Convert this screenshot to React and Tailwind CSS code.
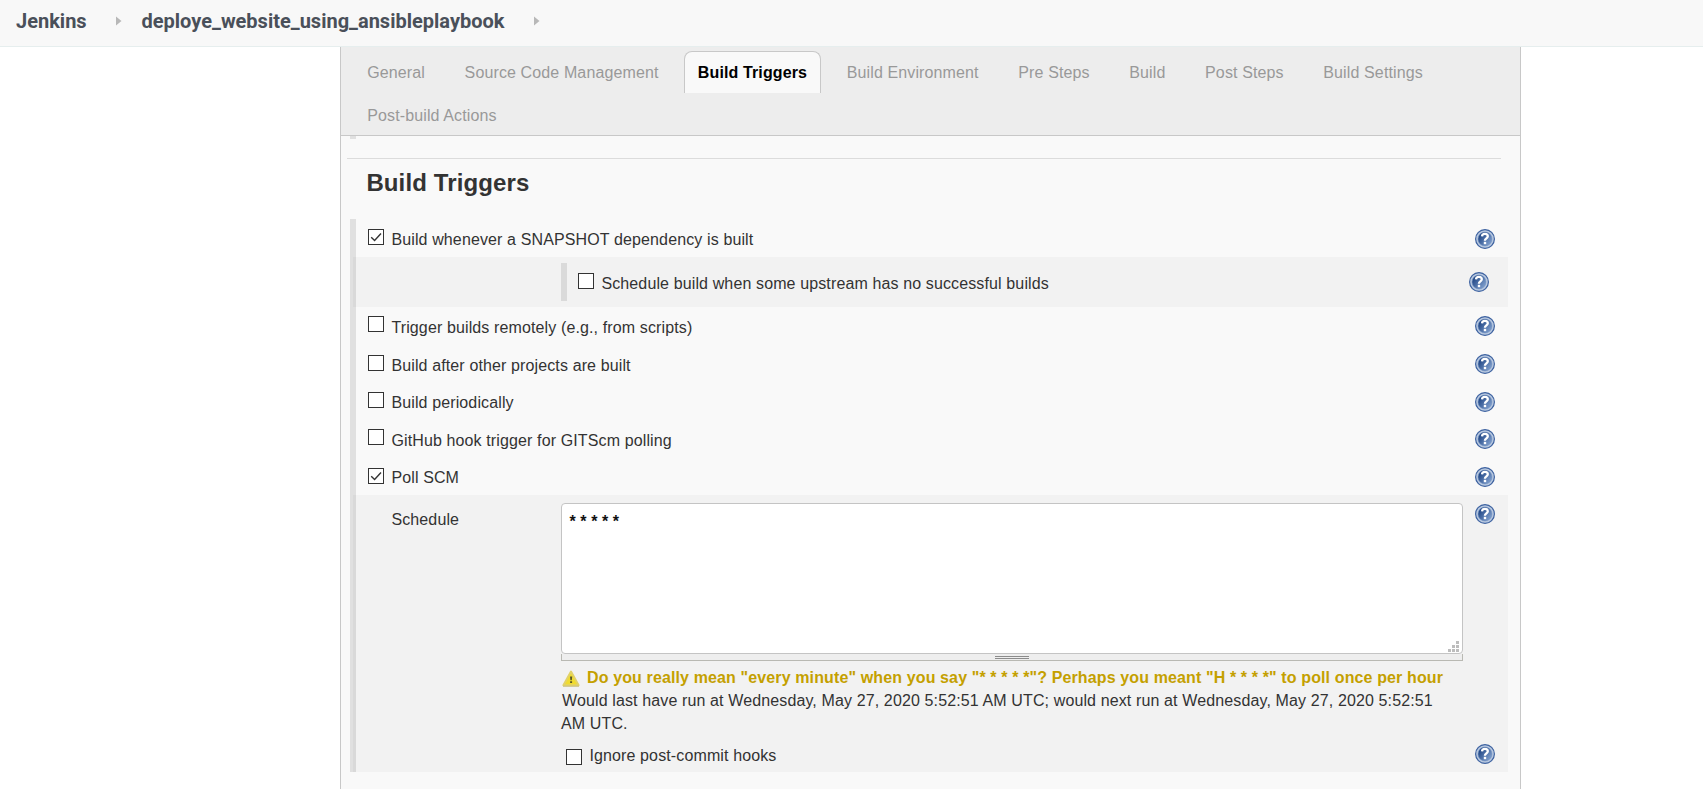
import React from "react";

const TABS = [
  "General",
  "Source Code Management",
  "Build Triggers",
  "Build Environment",
  "Pre Steps",
  "Build",
  "Post Steps",
  "Build Settings",
  "Post-build Actions",
];

function HelpIcon() {
  return (
    <svg width="20" height="20" viewBox="0 0 20 20" className="block shrink-0">
      <defs>
        <linearGradient id="helpFill" x1="0.1" y1="0.2" x2="0.9" y2="0.8">
          <stop offset="0" stopColor="#1f4584" />
          <stop offset="1" stopColor="#7c9ccb" />
        </linearGradient>
      </defs>
      <circle cx="10" cy="10" r="9.4" fill="#b9c9e0" stroke="#3d62a0" strokeWidth="1.2" />
      <circle cx="10" cy="10" r="7" fill="url(#helpFill)" stroke="#6d8dbf" strokeWidth="0.5" />
      <path d="M7 7.4C7.1 5.6 8.3 4.9 9.9 4.9c1.8 0 2.9.9 2.9 2.4 0 2-2.9 2.1-2.9 4.4" fill="none" stroke="#fff" strokeWidth="2.3" />
      <rect x="8.8" y="12.8" width="2.4" height="2.4" fill="#fff" />
    </svg>
  );
}

function Checkbox({ checked }) {
  return (
    <span className="block size-4 shrink-0 border border-[#333] bg-white">
      {checked && (
        <svg width="14" height="14" viewBox="0 0 14 14" className="block">
          <path d="M2.2 7.2 5.6 10.5 12 3.6" fill="none" stroke="#333" strokeWidth="1.4" />
        </svg>
      )}
    </span>
  );
}

function Crumb({ children, className }) {
  return (
    <span className={"font-['Roboto',sans-serif] text-[20px] leading-6 font-bold tracking-normal text-[#4a505a] " + className}>
      {children}
    </span>
  );
}

function Arrow({ className }) {
  return (
    <svg width="6" height="10" viewBox="0 0 6 10" className={"block shrink-0 " + className}>
      <path d="M0 0.5 5.5 5 0 9.5z" fill="#b8b8b8" />
    </svg>
  );
}

const TRIGGERS_AFTER = [
  { label: "Trigger builds remotely (e.g., from scripts)", row: "h-[39px]", box: "mt-[9px]", text: "mt-[9px]", help: "mt-[9px]" },
  { label: "Build after other projects are built", row: "h-[37px]", box: "mt-[9px]", text: "mt-[8px]", help: "mt-[8px]" },
  { label: "Build periodically", row: "h-[37px]", box: "mt-[9px]", text: "mt-[8px]", help: "mt-[9px]" },
  { label: "GitHub hook trigger for GITScm polling", row: "h-[38px]", box: "mt-[9px]", text: "mt-[9px]", help: "mt-[9px]" },
  { label: "Poll SCM", checked: true, row: "h-[37px]", box: "mt-[10px]", text: "mt-[8px]", help: "mt-[9px]" },
];

function TriggerRow({ label, checked, row, box, text, help }) {
  return (
    <div className={"flex items-start pr-[13px] pl-3 " + row}>
      <div className={box}>
        <Checkbox checked={checked} />
      </div>
      <span className={"ml-[7.4px] flex-1 " + text}>{label}</span>
      <div className={help}>
        <HelpIcon />
      </div>
    </div>
  );
}

export default function App() {
  return (
    <div className="flex h-[789px] w-[1703px] flex-col overflow-hidden bg-white font-['Liberation_Sans',Arial,sans-serif] text-base leading-[23px] tracking-[0.125px] text-[#333]">
      <header className="flex h-[47px] shrink-0 items-start border-b border-[#e6eeee] bg-[#f8f8f8] pt-[9px] pl-4">
        <Crumb className="w-[71px]">Jenkins</Crumb>
        <Arrow className="mt-[7px] ml-[29px]" />
        <Crumb className="ml-[19.5px] w-[363.5px]">deploye_website_using_ansibleplaybook</Crumb>
        <Arrow className="mt-[7px] ml-[29px]" />
      </header>

      <main className="ml-[340px] flex w-[1181px] flex-1 flex-col border-x border-[#c8c8c8] bg-[#f9f9f9]">
        <nav className="flex h-[89px] shrink-0 flex-wrap content-start gap-x-[12px] gap-y-px border-b border-[#c8c8c8] bg-[#ededed] pt-1 pl-[12.4px]">
          {TABS.map((tab) => (
            <div
              key={tab}
              className={
                tab === "Build Triggers"
                  ? "h-[42px] rounded-t-lg border border-b-0 border-[#c8c8c8] bg-[#f9f9f9] pt-[9px] pr-[12.8px] pl-[12.5px] font-bold tracking-[0.12px] text-black"
                  : "h-[42px] border border-b-0 border-transparent px-[12.8px] pt-[9px] text-[#999]"
              }
            >
              {tab}
            </div>
          ))}
        </nav>

        <div className="ml-[9px] h-[3px] w-[6px] shrink-0 bg-[#e0e0e0]" />
        <div className="mt-[19px] mr-[19px] ml-[6px] h-px shrink-0 bg-[#dcdcdc]" />
        <h2 className="mt-[8px] ml-[25.4px] h-[52px] shrink-0 text-2xl leading-8 font-bold tracking-[0.12px]">Build Triggers</h2>

        <section className="mr-3 ml-[9px] flex h-[553px] shrink-0">
          <div className="w-[3px] shrink-0 bg-[#e0e0e0]" />
          <div className="flex min-w-0 flex-1 flex-col">
            <div className="border-l-[3px] border-[#e0e0e0]">
              <TriggerRow
                label="Build whenever a SNAPSHOT dependency is built"
                checked
                row="h-[38px]"
                box="mt-[10px]"
                text="mt-[9px]"
                help="mt-[10px]"
              />
            </div>

            <div className="flex h-[50px] items-start border-l-[3px] border-[#d9d9d9] bg-[#f2f2f2] pr-[19px] pl-[205px]">
              <div className="mt-[6px] h-[38px] w-[6px] bg-[#dadada]" />
              <div className="mt-4 ml-[11px]">
                <Checkbox />
              </div>
              <span className="mt-[15px] ml-[7.4px] flex-1">Schedule build when some upstream has no successful builds</span>
              <div className="mt-[15px]">
                <HelpIcon />
              </div>
            </div>

            <div className="border-l-[3px] border-[#e0e0e0]">
              {TRIGGERS_AFTER.map((t) => (
                <TriggerRow key={t.label} {...t} />
              ))}
            </div>

            <div className="flex h-[277px] items-start border-l-[3px] border-[#d9d9d9] bg-[#f2f2f2] pr-[13px] pl-[35px]">
              <span className="mt-[13px] w-[170px] shrink-0 pl-[0.4px]">Schedule</span>
              <div className="mt-2 w-[902px] shrink-0">
                <div className="flex h-[151px] items-end justify-between rounded-[4px] border border-[#c4c4c4] bg-white pr-[3px] pb-px pl-[7.5px]">
                  <span className="self-start pt-[6px] font-bold tracking-[0.08px] text-[#111]">* * * * *</span>
                  <svg width="11" height="11" viewBox="0 0 11 11" className="block" fill="#bdbdbd">
                    <path d="M8 0h3v3H8zM4 4h3v3H4zM8 4h3v3H8zM0 8h3v3H0zM4 8h3v3H4zM8 8h3v3H8z" />
                  </svg>
                </div>
                <div className="flex h-[7px] flex-col items-center gap-px border border-t-0 border-[#b9b9b3] bg-[#eee] pt-[2px]">
                  <div className="h-px w-[34px] bg-[#8c8c8c]" />
                  <div className="h-px w-[34px] bg-[#8c8c8c]" />
                </div>
                <div className="mt-[5px] flex h-[23px] items-start pl-px font-bold whitespace-nowrap text-[#c4a000]">
                  <svg width="18" height="17" viewBox="0 0 18 17" className="mt-1 mr-[7px] block shrink-0">
                    <path d="M9 1.6 16.6 15.2H1.4z" fill="#f1dc2e" stroke="#e2d268" strokeWidth="2" strokeLinejoin="round" />
                    <path d="M1 16.2h16" stroke="#c9bd7c" strokeWidth="1" />
                    <path d="M8 6.4h2.2l-.4 3.8H8.4zM8.1 11.2h2v1.8h-2z" fill="#55552a" />
                  </svg>
                  Do you really mean &quot;every minute&quot; when you say &quot;* * * * *&quot;? Perhaps you meant &quot;H * * * *&quot; to poll once per hour
                </div>
                <p className="whitespace-nowrap">
                  <span className="pl-px">
                    Would last have run at Wednesday, May 27, 2020 5:52:51 AM UTC; would next run at Wednesday, May 27, 2020 5:52:51
                  </span>
                  <br />
                  AM UTC.
                </p>
                <div className="mt-[9px] flex items-start pl-[5px]">
                  <div className="mt-[5px]">
                    <Checkbox />
                  </div>
                  <span className="ml-[7.4px]">Ignore post-commit hooks</span>
                </div>
              </div>
              <div className="ml-auto flex h-full flex-col justify-between pt-[9px] pb-2">
                <HelpIcon />
                <HelpIcon />
              </div>
            </div>
          </div>
        </section>
      </main>
    </div>
  );
}
